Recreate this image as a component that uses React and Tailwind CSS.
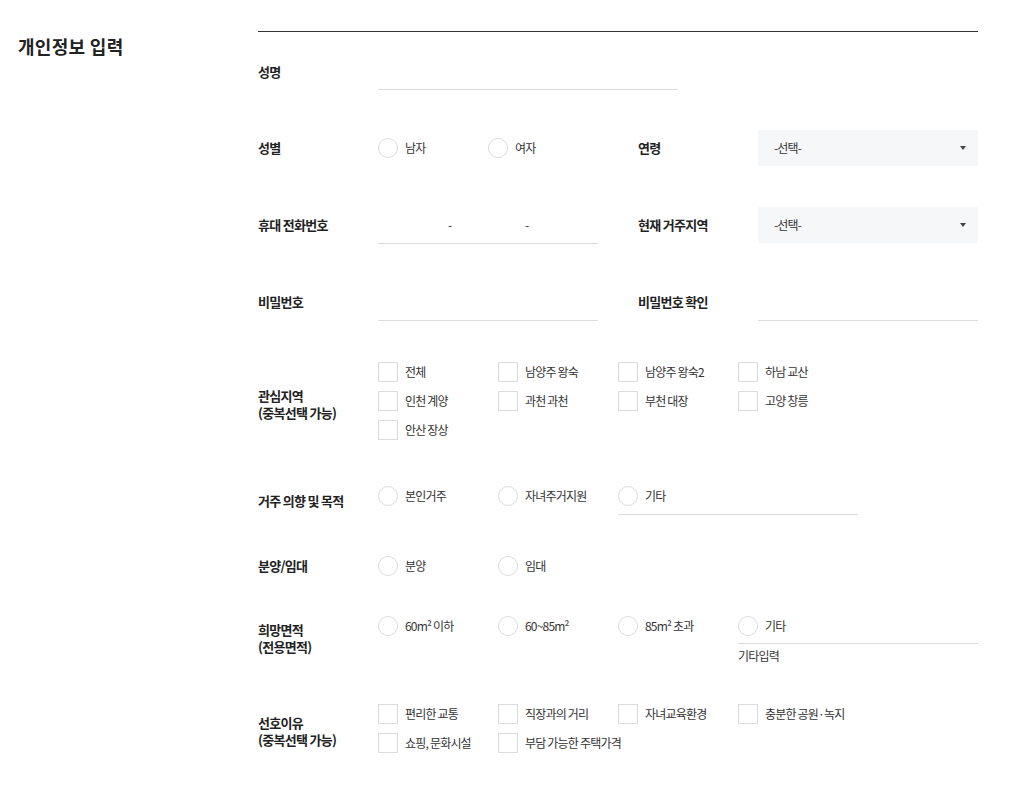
import React from 'react';

const REGIONS = ['전체', '남양주 왕숙', '남양주 왕숙2', '하남 교산', '인천 계양', '과천 과천', '부천 대장', '고양 창릉', '안산 장상'];
const REASONS = ['편리한 교통', '직장과의 거리', '자녀교육환경', '충분한 공원·녹지', '쇼핑, 문화시설', '부담 가능한 주택가격'];

function Label({ children, className = '' }) {
  return (
    <div className={`w-[120px] shrink-0 text-[13px] font-bold tracking-[-0.7px] text-[#222] ${className}`}>
      {children}
    </div>
  );
}

function Radio({ label, width = 'w-[120px]' }) {
  return (
    <label className={`${width} flex items-center h-[20px] shrink-0`}>
      <span className="w-[20px] h-[20px] rounded-full border border-[#dcdcdc] bg-white shrink-0" />
      <span className="ml-[7px] text-[12px] tracking-[-0.8px] text-[#333] leading-[20px] whitespace-nowrap">{label}</span>
    </label>
  );
}

function Check({ label }) {
  return (
    <label className="flex items-center h-[20px]">
      <span className="w-[20px] h-[20px] border border-[#dcdcdc] bg-white shrink-0" />
      <span className="ml-[7px] text-[12px] tracking-[-0.8px] text-[#333] leading-[20px] whitespace-nowrap">{label}</span>
    </label>
  );
}

function Select() {
  return (
    <div className="w-[220px] h-[36px] bg-[#f6f7f9] flex items-center justify-between pl-[16px] pr-[12px]">
      <span className="text-[12px] tracking-[-0.8px] text-[#333]">-선택-</span>
      <span className="w-0 h-0 border-l-[3px] border-r-[3px] border-t-[4px] border-l-transparent border-r-transparent border-t-[#444]" />
    </div>
  );
}

export default function App() {
  return (
    <div className="flex bg-white min-h-[789px] font-['Noto_Sans_CJK_KR','Noto_Sans',sans-serif]">
      <div className="w-[258px] pl-[18px] pt-[34px] shrink-0">
        <h2 className="text-[18px] font-bold tracking-[0.3px] leading-[24px] text-[#222]">개인정보 입력</h2>
      </div>

      <div className="w-[720px] mt-[31px] border-t border-[#333]">
        {/* 성명 */}
        <div className="mt-[22px] h-[36px] flex items-center">
          <Label>성명</Label>
          <div className="w-[300px] h-[36px] border-b border-[#dcdcdc]" />
        </div>

        {/* 성별 / 연령 */}
        <div className="mt-[40px] h-[36px] flex items-center">
          <div className="w-[340px] flex items-center">
            <Label>성별</Label>
            <Radio label="남자" width="w-[110px]" />
            <Radio label="여자" width="w-[110px]" />
          </div>
          <div className="ml-[40px] flex items-center">
            <Label>연령</Label>
            <Select />
          </div>
        </div>

        {/* 휴대 전화번호 / 현재 거주지역 */}
        <div className="mt-[41px] h-[36px] flex items-center">
          <div className="w-[340px] flex items-center">
            <Label>휴대 전화번호</Label>
            <div className="w-[220px] h-[37px] border-b border-[#dcdcdc] flex items-center text-[12px] text-[#333]">
              <div className="w-[66px]" />
              <div className="w-[12px] text-center">-</div>
              <div className="w-[65px]" />
              <div className="w-[12px] text-center">-</div>
              <div className="w-[65px]" />
            </div>
          </div>
          <div className="ml-[40px] flex items-center">
            <Label>현재 거주지역</Label>
            <Select />
          </div>
        </div>

        {/* 비밀번호 */}
        <div className="mt-[41px] h-[36px] flex items-center">
          <div className="w-[340px] flex items-center">
            <Label>비밀번호</Label>
            <div className="w-[220px] h-[37px] border-b border-[#dcdcdc]" />
          </div>
          <div className="ml-[40px] flex items-center">
            <Label>비밀번호 확인</Label>
            <div className="w-[220px] h-[37px] border-b border-[#dcdcdc]" />
          </div>
        </div>

        {/* 관심지역 */}
        <div className="mt-[42px] flex items-center">
          <Label className="pt-[6px] leading-[17px]">
            관심지역
            <br />
            (중복선택 가능)
          </Label>
          <div className="w-[480px] grid grid-cols-4 gap-y-[9px]">
            {REGIONS.map((r) => (
              <Check key={r} label={r} />
            ))}
          </div>
        </div>

        {/* 거주 의향 및 목적 */}
        <div className="mt-[46px] flex items-start">
          <Label className="mt-[5px] leading-[20px]">거주 의향 및 목적</Label>
          <Radio label="본인거주" />
          <Radio label="자녀주거지원" />
          <div className="w-[240px] h-[29px] border-b border-[#dcdcdc]">
            <Radio label="기타" />
          </div>
        </div>

        {/* 분양/임대 */}
        <div className="mt-[41px] flex items-center">
          <Label className="leading-[20px]">분양/임대</Label>
          <Radio label="분양" />
          <Radio label="임대" />
        </div>

        {/* 희망면적 */}
        <div className="mt-[40px] flex items-start">
          <Label className="mt-[5px] leading-[17px]">
            희망면적
            <br />
            (전용면적)
          </Label>
          <Radio label="60m² 이하" />
          <Radio label="60~85m²" />
          <Radio label="85m² 초과" />
          <div className="w-[240px]">
            <div className="h-[28px] border-b border-[#dcdcdc]">
              <Radio label="기타" />
            </div>
            <div className="mt-[4px] text-[12px] leading-[16px] tracking-[-0.8px] text-[#333]">기타입력</div>
          </div>
        </div>

        {/* 선호이유 */}
        <div className="mt-[40px] flex items-start">
          <Label className="mt-[10px] leading-[17px]">
            선호이유
            <br />
            (중복선택 가능)
          </Label>
          <div className="w-[480px] grid grid-cols-4 gap-y-[9px]">
            {REASONS.map((r) => (
              <Check key={r} label={r} />
            ))}
          </div>
        </div>
      </div>
    </div>
  );
}
